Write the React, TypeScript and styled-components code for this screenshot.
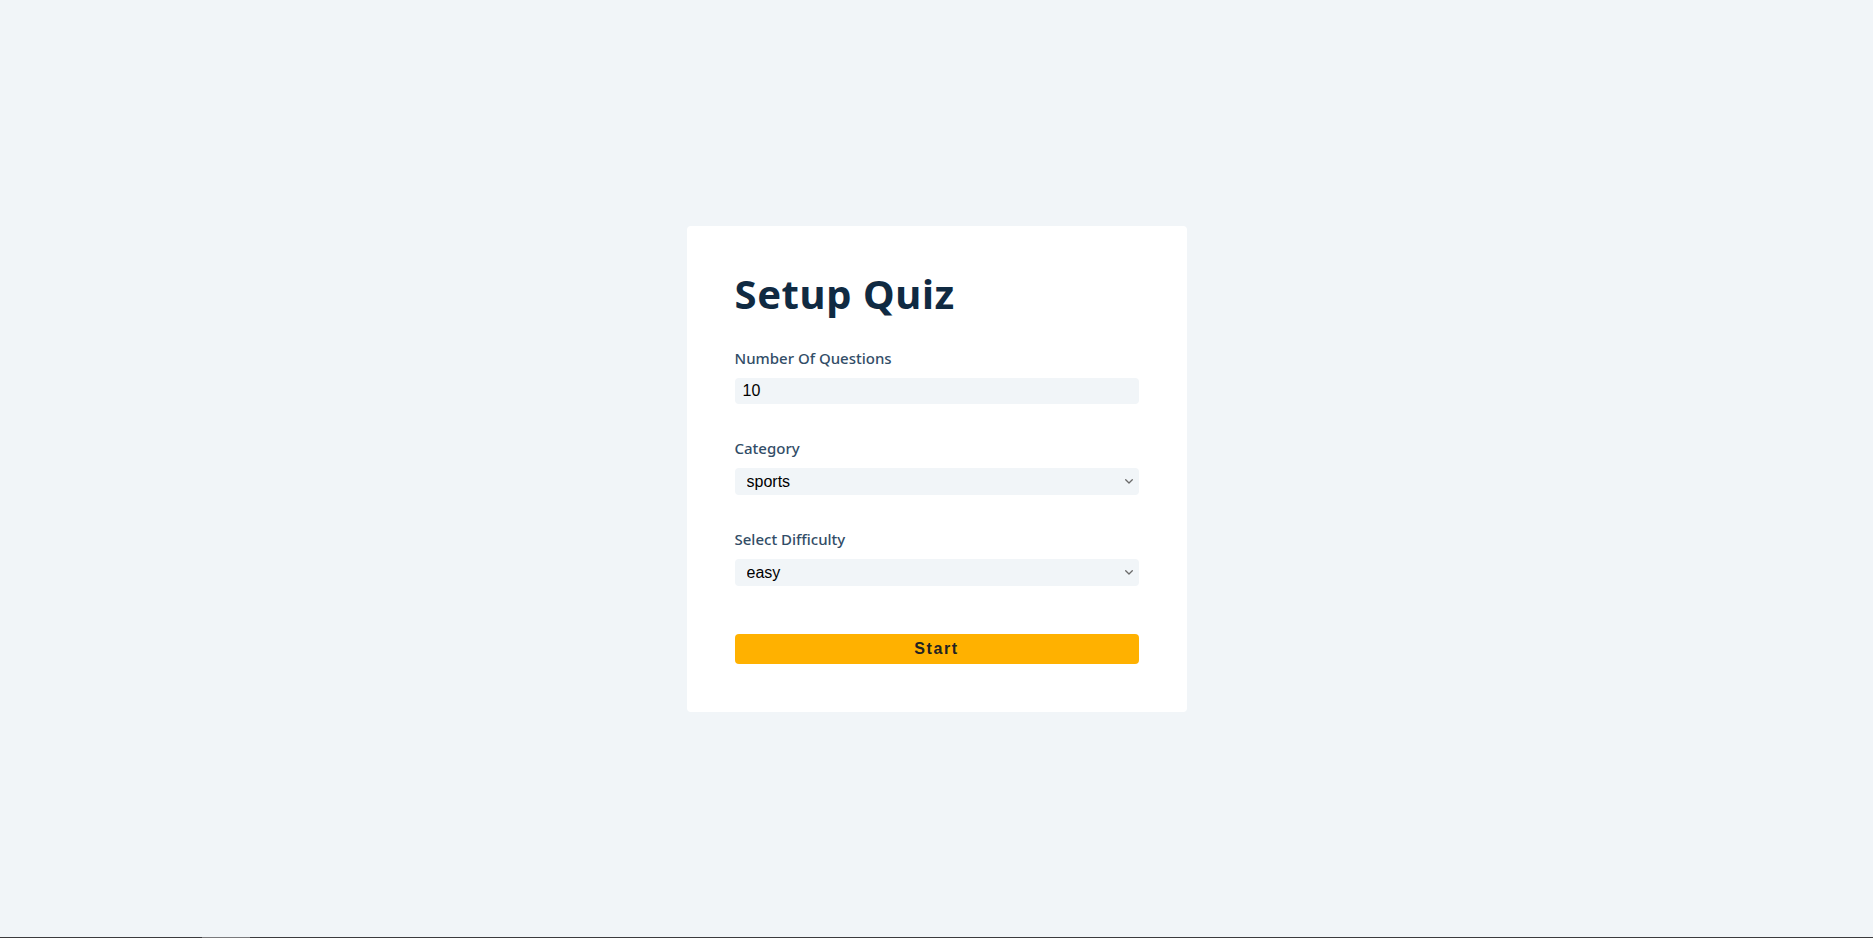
import React from "react";
import styled, { createGlobalStyle } from "styled-components";

const GlobalStyle = createGlobalStyle`
    *, *::before, *::after {
        box-sizing: border-box;
    }
    body {
        margin: 0;
        background: #f1f5f8;
        font-family: "Noto Sans", "Open Sans", sans-serif;
        font-size: 16px;
        line-height: 1.5;
        color: #102a42;
    }
`;

const Page = styled.main`
    min-height: calc(100vh - 1px);
    display: flex;
    align-items: center;
    justify-content: center;
`;

const BottomEdge = styled.div`
    display: flex;
    height: 1px;
    background: #3b3b3d;
`;

const EdgeSegment = styled.div<{ $w: number; $light?: boolean }>`
    width: ${(p) => p.$w}px;
    background: ${(p) => (p.$light ? "#7a7a7c" : "transparent")};
`;

const Card = styled.section`
    width: 500px;
    background: #ffffff;
    border-radius: 4px;
    padding: 48px;
`;

const Title = styled.h2`
    margin: 0 0 32px;
    font-size: 40px;
    line-height: 40px;
    font-weight: 700;
    letter-spacing: 0.6px;
    color: #102a42;
`;

const Field = styled.div`
    margin-bottom: 32px;
`;

const Label = styled.label`
    display: block;
    margin-bottom: 8px;
    font-size: 15px;
    line-height: 24px;
    font-weight: 500;
    color: #324d67;
`;

const inputStyles = `
    display: block;
    width: 100%;
    border: none;
    border-radius: 4px;
    background: #f1f5f8;
    font-family: "Liberation Sans", Arial, sans-serif;
    font-size: 16px;
    color: #000;
    padding: 4px 8px;
    outline: none;
`;

const Input = styled.input`
    ${inputStyles}
`;

const SelectWrap = styled.div`
    position: relative;
`;

const Select = styled.select`
    ${inputStyles}
    appearance: none;
    -webkit-appearance: none;
    height: 27px;
    padding: 4px 24px 4px 12px;
`;

const Chevron = styled.svg`
    position: absolute;
    right: 6px;
    top: 50%;
    width: 8px;
    height: 5px;
    margin-top: -2px;
    pointer-events: none;
`;

const SubmitButton = styled.button`
    display: block;
    width: 100%;
    margin-top: 48px;
    height: 30px;
    border: none;
    border-radius: 4px;
    background: #ffb100;
    color: #222;
    font-family: "Liberation Sans", Arial, sans-serif;
    font-size: 16px;
    font-weight: 700;
    letter-spacing: 1.6px;
    cursor: pointer;
`;

type Option = { value: string; label: string };

const Dropdown: React.FC<{ id: string; value: string; options: Option[] }> = ({ id, value, options }) => (
    <SelectWrap>
        <Select id={id} defaultValue={value}>
            {options.map((o) => (
                <option key={o.value} value={o.value}>
                    {o.label}
                </option>
            ))}
        </Select>
        <Chevron viewBox="0 0 8 5" fill="none">
            <path d="M0.7 0.7 L4 4 L7.3 0.7" stroke="#6b6b6b" strokeWidth="1.3" strokeLinecap="round" strokeLinejoin="round" />
        </Chevron>
    </SelectWrap>
);

const categories: Option[] = [
    { value: "sports", label: "sports" },
    { value: "history", label: "history" },
    { value: "politics", label: "politics" },
];

const difficulties: Option[] = [
    { value: "easy", label: "easy" },
    { value: "medium", label: "medium" },
    { value: "hard", label: "hard" },
];

const App: React.FC = () => {
    return (
        <>
            <GlobalStyle />
            <Page>
                <Card>
                    <form onSubmit={(e) => e.preventDefault()}>
                        <Title>Setup Quiz</Title>
                        <Field>
                            <Label htmlFor="amount">Number Of Questions</Label>
                            <Input id="amount" type="number" defaultValue={10} min={1} max={50} />
                        </Field>
                        <Field>
                            <Label htmlFor="category">Category</Label>
                            <Dropdown id="category" value="sports" options={categories} />
                        </Field>
                        <Field>
                            <Label htmlFor="difficulty">Select Difficulty</Label>
                            <Dropdown id="difficulty" value="easy" options={difficulties} />
                        </Field>
                        <SubmitButton type="submit">Start</SubmitButton>
                    </form>
                </Card>
            </Page>
            <BottomEdge>
                <EdgeSegment $w={202} />
                <EdgeSegment $w={48} $light />
            </BottomEdge>
        </>
    );
};

export default App;
